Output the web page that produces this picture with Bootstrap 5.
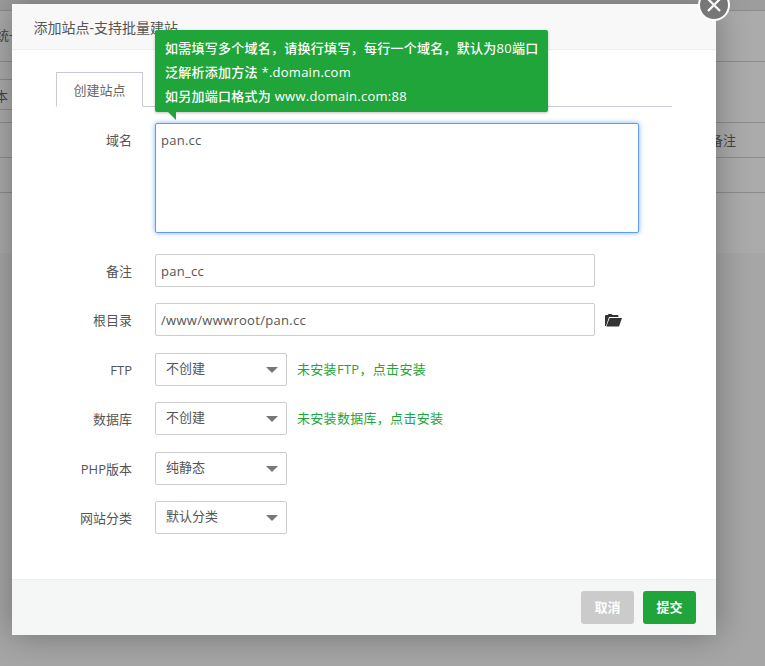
<!DOCTYPE html>
<html lang="zh"><head><meta charset="utf-8">
<link href="https://cdn.jsdelivr.net/npm/bootstrap@5.3.0/dist/css/bootstrap.min.css" rel="stylesheet">
<style>
html,body{height:100%;margin:0;overflow:hidden}
body{background:#a6a6a6;font-family:"Open Sans","Noto Sans CJK SC",sans-serif;font-size:13px;color:#555;position:relative}
.bg-panel{height:253px;background:#ababab;border-top:0}
.bg-row{border-bottom:1px solid #8c8c8c;position:relative;color:#444;font-size:13px}
.r1{height:11px;background:#9d9d9d}.r2{height:51px}.r3{height:61px}.r4{height:35px}.r5{height:35px}
.bg-sub{position:absolute;left:0;width:40px;border-bottom:1px solid #8c8c8c}
.sub1{top:17px;height:1px}.sub2{top:47px;height:1px}
.bg-tx{position:absolute;white-space:nowrap;line-height:18px}
.t1{left:-4px;top:15px}.t2{left:-5px;top:25px}.t3{right:29px;top:8px}
.dlg{position:absolute;left:12px;top:4px;width:704px;height:631px;background:#fff;box-shadow:0 0 32px rgba(0,0,0,.32);display:flex;flex-direction:column}
.dlg-head{height:46px;flex:none;background:#f8f8f8;border-bottom:1px solid #eee;padding:0 22px 0 21.500px;font-size:14px;line-height:48px;color:#555}
.dlg-body{flex:1;padding:22px 44px 0}
.dlg-foot{height:56px;flex:none;background:#f5f6f6;border-top:1px solid #eee;padding:11px 20px 0 0;display:flex;justify-content:flex-end;gap:9px}
.tabs-line{height:35px;border-bottom:1px solid #c8c8d8;display:flex}
.tab-on{width:87px;height:35px;border:1px solid #c8c8d8;border-bottom:1px solid #fff;background:#fff;text-align:center;line-height:35px;color:#666}
.form-rows{margin-top:16px}
.f-row{display:flex;align-items:flex-start}
.f-row>label{width:76px;height:33px;flex:none;text-align:right;margin-right:23px;line-height:35px;color:#555}
.f-box{border:1px solid #ccc;border-radius:2px;color:#555;font-size:13px;height:33px;padding:0 5px;background:#fff;font-family:inherit;outline:0}
.f-area{width:484px;height:110px;padding:7px 5px;border:1px solid #5a9ef5;box-shadow:0 0 5px rgba(90,158,245,.8);resize:none;display:block;line-height:18px;border-radius:2px;color:#555;font-size:13px;letter-spacing:.25px;font-family:inherit;outline:0}
.f-input{width:440px;letter-spacing:.3px}
.f-sel{width:132px;padding:0 10px 2px;appearance:none;background-image:url("data:image/svg+xml,%3Csvg xmlns='http://www.w3.org/2000/svg' width='12' height='6'%3E%3Cpath d='M0 0h12L6 6z' fill='%23777'/%3E%3C/svg%3E");background-repeat:no-repeat;background-position:right 8px center}
.mb-a{margin-bottom:21px}.mb-b{margin-bottom:16px}.mb-c{margin-bottom:17px}
.hint{color:#20a53a;line-height:33px;margin-left:10px;letter-spacing:.3px}
.fold{margin:11px 0 0 10px;display:block}
.act{width:53px;height:33px;border:0;border-radius:3px;padding:0;font-size:13px;font-weight:700;color:#fff;line-height:33px;font-family:inherit}
.act-off{background:#cbcbcb}.act-on{background:#20a53a}
.tipbox{position:absolute;left:155px;top:30px;width:393px;height:82px;background:#20a53a;color:#fff;border-radius:2px;padding:6px 10px;line-height:24px;font-weight:500;letter-spacing:.26px;white-space:nowrap;box-shadow:0 1px 3px rgba(0,0,0,.25)}
.tipbox::after{content:"";position:absolute;left:13px;top:82px;border-style:solid;border-width:8px 0 0 8px;border-color:#20a53a transparent transparent transparent}
.xbtn{position:absolute;left:698px;top:-11px;width:32px;height:32px;border-radius:50%;background:#777;border:2px solid #fff;padding:0;display:flex;align-items:center;justify-content:center}
</style></head><body>
<div class="bg-panel">
 <div class="bg-row r1"></div>
 <div class="bg-row r2"><span class="bg-tx t1">统一</span></div>
 <div class="bg-row r3"><span class="bg-sub sub1"></span><span class="bg-sub sub2"></span><span class="bg-tx t2">本</span></div>
 <div class="bg-row r4"><span class="bg-tx t3">备注</span></div>
 <div class="bg-row r5"></div>
</div>
<div class="dlg">
 <div class="dlg-head">添加站点-支持批量建站</div>
 <div class="dlg-body">
  <div class="tabs-line"><div class="tab-on">创建站点</div></div>
  <form class="form-rows">
   <div class="f-row mb-a"><label>域名</label><textarea class="f-area">pan.cc</textarea></div>
   <div class="f-row mb-b"><label>备注</label><input class="f-box f-input" value="pan_cc"></div>
   <div class="f-row mb-c"><label>根目录</label><input class="f-box f-input" value="/www/wwwroot/pan.cc">
    <svg class="fold" width="17" height="13" viewBox="0 0 17 13"><path d="M0 12V2.2C0 1.5.5 1 1.2 1h1.6l.7-1h3.200l.7 1h5c.6 0 1 .4 1 1v1H4L1 12z" fill="#333"/><path d="M4.600 4H17l-3 8.400H1.400z" fill="#333"/></svg></div>
   <div class="f-row mb-b"><label>FTP</label><select class="f-box f-sel"><option>不创建</option></select><span class="hint">未安装FTP&#65292;点击安装</span></div>
   <div class="f-row mb-c"><label>数据库</label><select class="f-box f-sel"><option>不创建</option></select><span class="hint">未安装数据库&#65292;点击安装</span></div>
   <div class="f-row mb-b"><label>PHP版本</label><select class="f-box f-sel"><option>纯静态</option></select></div>
   <div class="f-row"><label>网站分类</label><select class="f-box f-sel"><option>默认分类</option></select></div>
  </form>
 </div>
 <div class="dlg-foot"><button class="act act-off btn">取消</button><button class="act act-on btn">提交</button></div>
</div>
<div class="tipbox">如需填写多个域名&#65292;请换行填写&#65292;每行一个域名&#65292;默认为80端口<br>泛解析添加方法 *.domain.com<br>如另加端口格式为 www.domain.com:88</div>
<button class="xbtn" aria-label="关闭"><svg width="18" height="18" viewBox="0 0 18 18"><path d="M3 3l12 12M15 3L3 15" stroke="#fff" stroke-width="2.200" fill="none"/></svg></button>
<script src="https://cdn.jsdelivr.net/npm/bootstrap@5.3.0/dist/js/bootstrap.bundle.min.js"></script>
</body></html>
